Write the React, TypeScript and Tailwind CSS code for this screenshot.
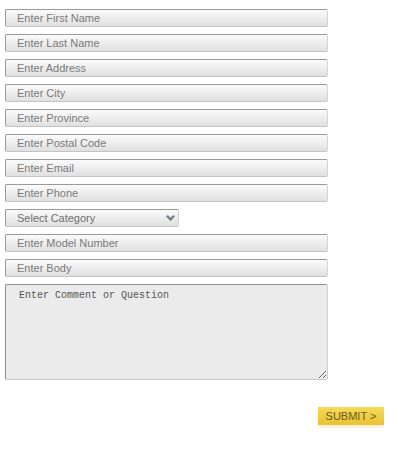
import React from "react";

const fields = [
  "Enter First Name",
  "Enter Last Name",
  "Enter Address",
  "Enter City",
  "Enter Province",
  "Enter Postal Code",
  "Enter Email",
  "Enter Phone",
];

const inputCls =
  "block h-[18px] w-[323px] rounded-[2px] border border-t-[#9a9a9a] border-l-[#9a9a9a] border-r-[#d4d4d4] border-b-[#c4c4c4] bg-gradient-to-b from-[#fbfbfb] to-[#e0e0e0] pl-[11px] text-[11px] leading-none text-[#777] placeholder:text-[#7a7a7a] outline-none";

const Field = ({ ph }: { ph: string }) => (
  <input className={inputCls} placeholder={ph} style={{ fontFamily: '"Liberation Sans", Arial, sans-serif' }} />
);

export default function App() {
  return (
    <div className="min-h-[450px] w-[404px] bg-white pl-[5px] pt-[9px]" style={{ fontFamily: '"Liberation Sans", Arial, sans-serif' }}>
      <form className="flex flex-col gap-[7px]">
        {fields.map((f) => (
          <Field key={f} ph={f} />
        ))}

        {/* category dropdown */}
        <div className="relative flex h-[18px] w-[174px]">
          <select
            defaultValue=""
            className="block h-[18px] w-[174px] appearance-none rounded-[2px] border border-t-[#9a9a9a] border-l-[#9a9a9a] border-r-[#d4d4d4] border-b-[#c4c4c4] bg-gradient-to-b from-[#fbfbfb] to-[#e0e0e0] py-0 pl-[11px] text-[11px] leading-none text-[#6f6f6f] outline-none"
          >
            <option value="">Select Category</option>
          </select>
          <svg className="pointer-events-none absolute right-[4px] top-[6px]" width="9" height="7" viewBox="0 0 9 7">
            <path d="M0 1.6 L1.6 0 L4.5 2.6 L7.4 0 L9 1.6 L4.5 6.2 Z" fill="#7a828c" />
          </svg>
        </div>

        <Field ph="Enter Model Number" />
        <Field ph="Enter Body" />

        <textarea
          className="block h-[96px] w-[323px] rounded-[2px] border border-t-[#8f8f8f] border-l-[#8f8f8f] border-r-[#d0d0d0] border-b-[#c8c8c8] bg-[#ebebeb] pl-[13px] pt-[3px] text-[10px] text-[#555] placeholder:text-[#555] outline-none"
          placeholder="Enter Comment or Question"
          spellCheck={false}
          style={{ fontFamily: '"Liberation Mono", "Courier New", monospace' }}
        />

        <div className="mt-[20px] pl-[313px]">
          <button
            type="button"
            className="flex h-[18px] w-[66px] items-center justify-center bg-gradient-to-b from-[#f6da55] to-[#e9c234] text-[11px] leading-none text-[#6b5a1c] shadow-[0_3px_3px_-1px_rgba(230,200,90,0.35)]"
          >
            SUBMIT &gt;
          </button>
        </div>
      </form>
    </div>
  );
}
